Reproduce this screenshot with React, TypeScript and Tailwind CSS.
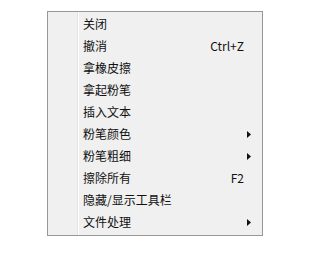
const items: { label: string; shortcut?: string; submenu?: boolean }[] = [
  { label: '关闭' },
  { label: '撤消', shortcut: 'Ctrl+Z' },
  { label: '拿橡皮擦' },
  { label: '拿起粉笔' },
  { label: '插入文本' },
  { label: '粉笔颜色', submenu: true },
  { label: '粉笔粗细', submenu: true },
  { label: '擦除所有', shortcut: 'F2' },
  { label: '隐藏/显示工具栏' },
  { label: '文件处理', submenu: true },
];

export default function App() {
  return (
    <div className="w-[326px] h-[260px] bg-white pt-[11px] pl-[47px]">
      {/* Context menu */}
      <div className="w-[216px] h-[225px] border border-[#979797] bg-[#f0f0f0] flex font-['Noto_Sans_CJK_SC',sans-serif] text-[12px] text-[#111]">
        {/* Icon gutter */}
        <div className="w-[29px] shrink-0" />
        <div className="w-px bg-[#e2e3e3]" />
        <div className="w-px bg-white" />

        {/* Items */}
        <div className="flex-1 flex flex-col pt-[1px] pb-[2px]">
          {items.map((item) => (
            <div key={item.label} className="h-[22px] flex items-center pl-[4px]">
              <span className="flex-1 leading-none">{item.label}</span>
              {item.shortcut && <span className="leading-none">{item.shortcut}</span>}
              <span className="w-[18px] h-full flex items-center pl-[3px]">
                {item.submenu && (
                  <svg width="4" height="7" viewBox="0 0 4 7">
                    <path d="M0 0 L4 3.5 L0 7 Z" fill="#111" />
                  </svg>
                )}
              </span>
            </div>
          ))}
        </div>
      </div>
    </div>
  );
}
